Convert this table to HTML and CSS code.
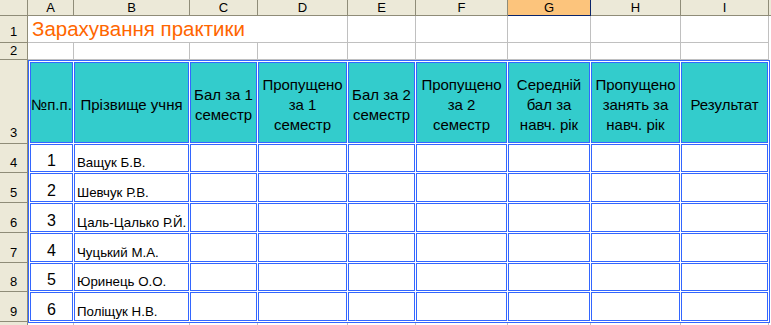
FILE: index.html
```html
<!DOCTYPE html>
<html>
<head>
  <meta charset="utf-8">
  <link rel="stylesheet" href="styles.css">
</head>
<body>
  <div class="sheet">
    <div class="colheads">
      <div class="corner"></div>
      <div class="ch w-a">A</div>
      <div class="ch w-b">B</div>
      <div class="ch w-c">C</div>
      <div class="ch w-d">D</div>
      <div class="ch w-e">E</div>
      <div class="ch w-f">F</div>
      <div class="ch w-g active">G</div>
      <div class="ch w-h">H</div>
      <div class="ch w-i">I</div>
      <div class="ch rest"></div>
    </div>

    <div class="body">
      <div class="rowheads">
        <div class="rh h-1">1</div>
        <div class="rh h-2">2</div>
        <div class="rh h-3">3</div>
        <div class="rh h-4">4</div>
        <div class="rh h-5">5</div>
        <div class="rh h-6">6</div>
        <div class="rh h-7">7</div>
        <div class="rh h-8">8</div>
        <div class="rh h-9">9</div>
        <div class="rh h-10"></div>
      </div>

      <div class="cells">
        <div class="gridrow r-1">
          <div class="gc w-abc title">Зарахування практики</div>
          <div class="gc w-d"></div>
          <div class="gc w-e"></div>
          <div class="gc w-f"></div>
          <div class="gc w-g"></div>
          <div class="gc w-h"></div>
          <div class="gc w-i"></div>
        </div>
        <div class="gridrow r-2">
          <div class="gc w-a"></div>
          <div class="gc w-b"></div>
          <div class="gc w-c"></div>
          <div class="gc w-d"></div>
          <div class="gc w-e"></div>
          <div class="gc w-f"></div>
          <div class="gc w-g"></div>
          <div class="gc w-h"></div>
          <div class="gc w-i"></div>
        </div>

        <!-- journal: header row + one row per pupil -->
        <div class="journal" id="journal">
          <div class="jh">№п.п.</div>
          <div class="jh">Прізвище учня</div>
          <div class="jh">Бал за 1<br>семестр</div>
          <div class="jh">Пропущено<br>за 1<br>семестр</div>
          <div class="jh">Бал за 2<br>семестр</div>
          <div class="jh">Пропущено<br>за 2<br>семестр</div>
          <div class="jh">Середній<br>бал за<br>навч. рік</div>
          <div class="jh">Пропущено<br>занять за<br>навч. рік</div>
          <div class="jh">Результат</div>
        </div>

        <div class="gridrow r-10">
          <div class="gc w-a"></div>
          <div class="gc w-b"></div>
          <div class="gc w-c"></div>
          <div class="gc w-d"></div>
          <div class="gc w-e"></div>
          <div class="gc w-f"></div>
          <div class="gc w-g"></div>
          <div class="gc w-h"></div>
          <div class="gc w-i"></div>
        </div>
      </div>
    </div>
  </div>

  <script>
    const pupils = [
      'Ващук Б.В.',
      'Шевчук Р.В.',
      'Цаль-Цалько Р.Й.',
      'Чуцький М.А.',
      'Юринець О.О.',
      'Поліщук Н.В.'
    ];
    const journal = document.getElementById('journal');

    pupils.forEach((name, i) => {
      const num = document.createElement('div');
      num.className = 'jc num';
      num.textContent = i + 1;
      journal.appendChild(num);

      const who = document.createElement('div');
      who.className = 'jc name';
      who.textContent = name;
      journal.appendChild(who);

      // empty mark columns
      for (let c = 0; c < 7; c++) {
        const cell = document.createElement('div');
        cell.className = 'jc';
        journal.appendChild(cell);
      }
    });
  </script>
</body>
</html>
```

FILE: styles.css
```css
* {
  box-sizing: border-box;
}
body {
  margin: 0;
  background: #fff;
  font-family: "Liberation Sans", Arial, sans-serif;
  overflow: hidden;
}
.sheet {
  width: 771px;
  height: 325px;
  overflow: hidden;
}

/* column letters */
.colheads {
  display: flex;
  height: 16px;
}
.corner, .ch {
  background: #ece9d8;
  border-right: 1px solid #8f8c78;
  border-bottom: 1px solid #8f8c78;
}
.corner {
  width: 28px;
  flex: none;
}
.ch {
  flex: none;
  font-size: 13px;
  line-height: 15px;
  text-align: center;
  color: #000;
}
.ch.active {
  background: #fcc47c;
  border-right-color: #0a246a;
  border-bottom-color: #0a246a;
}
.ch.rest {
  flex: 1;
  border-right: none;
}

.w-a { width: 46px; }
.w-b { width: 116px; }
.w-c { width: 68px; }
.w-d { width: 90px; }
.w-e { width: 68px; }
.w-f { width: 92px; }
.w-g { width: 83px; }
.w-h { width: 90px; }
.w-i { width: 88px; }
.w-abc { width: 230px; }

.body {
  display: flex;
}

/* row numbers */
.rowheads {
  width: 28px;
  flex: none;
}
.rh {
  background: #ece9d8;
  border-right: 1px solid #8f8c78;
  border-bottom: 1px solid #8f8c78;
  font-size: 13px;
  line-height: 13px;
  text-align: center;
  display: flex;
  align-items: flex-end;
  justify-content: center;
  padding-bottom: 3px;
}
.h-1 { height: 27px; padding-bottom: 4px; }
.h-2 { height: 17px; padding-bottom: 2px; }
.h-3 { height: 84px; padding-bottom: 4px; }
.h-4, .h-8 { height: 29px; }
.h-5, .h-6, .h-7, .h-9 { height: 30px; }
.h-10 { height: 20px; border-bottom: none; }

.cells {
  flex: none;
  width: 743px;
}

/* plain gridlines above and below the journal */
.gridrow {
  display: flex;
}
.gc {
  flex: none;
  border-right: 1px solid #c0c0c0;
  border-bottom: 1px solid #c0c0c0;
}
.r-1 .gc { height: 27px; }
.r-2 .gc { height: 17px; }
.r-10 .gc { height: 20px; border-bottom: none; }

.title {
  border-right: none;
  color: #ff6600;
  font-size: 20.5px;
  line-height: 20px;
  padding: 3px 0 0 4px;
  white-space: nowrap;
}

/* journal with double blue borders */
.journal {
  display: grid;
  grid-template-columns: 43px 115px 67px 89px 67px 91px 82px 89px 87px;
  grid-template-rows: 81px 28px 29px 29px 29px 28px 29px;
  gap: 1px;
  padding: 1px;
  width: 742px;
  border: 1px solid #3366ff;
  background: #fff;
}
.jh, .jc {
  border: 1px solid #3366ff;
  background: #fff;
}
.jh {
  background: #33cccc;
  display: flex;
  align-items: center;
  justify-content: center;
  text-align: center;
  font-size: 15px;
  line-height: 20px;
  padding-top: 4px;
  white-space: nowrap;
}
.jc {
  display: flex;
  align-items: flex-end;
}
.num {
  justify-content: center;
  font-size: 16px;
  line-height: 16px;
  padding-bottom: 2px;
}
.name {
  font-size: 13.3px;
  line-height: 13px;
  padding: 0 0 2px 2px;
  white-space: nowrap;
}
```
